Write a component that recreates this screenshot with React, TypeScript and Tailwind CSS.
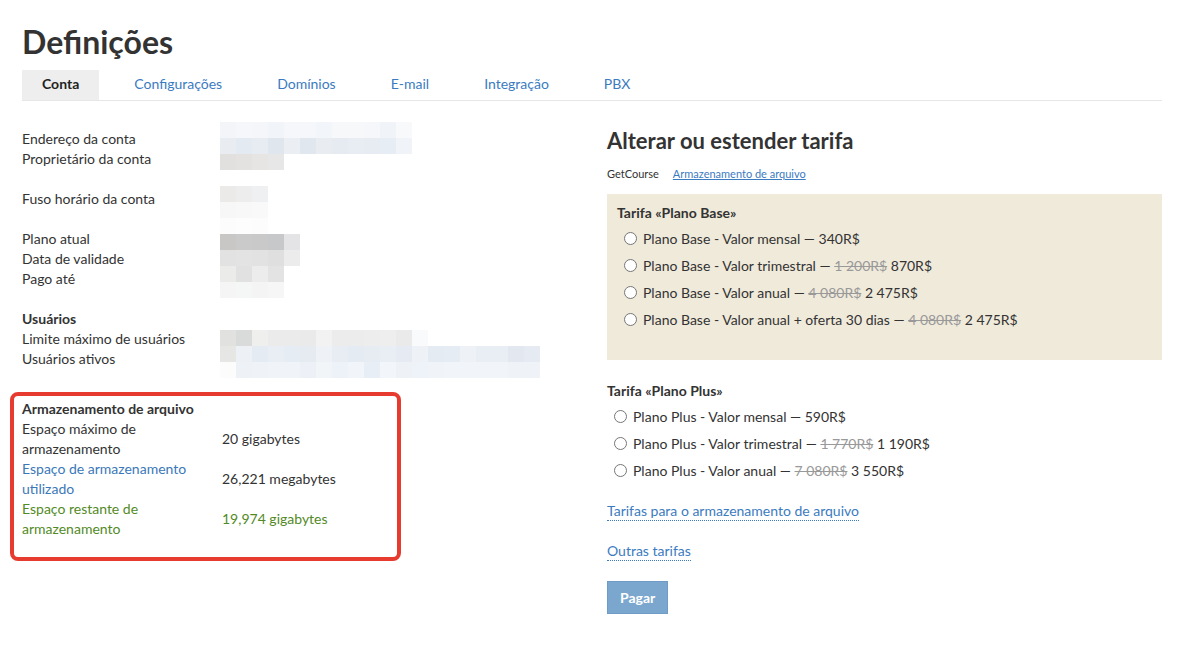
import React from "react";

type Cell = string;

// pixelated (blurred) values, 16px cells
const mosaicAccount: Cell[][] = [
  ["bg-[#f3f5f9]", "bg-[#f5f7fa]", "bg-[#f4f6f9]", "bg-[#f1f4f8]", "bg-[#f6f7fa]", "bg-[#f5f7fa]", "bg-[#f2f5f9]", "bg-[#f6f8fa]", "bg-[#f7f8fa]", "bg-[#f5f7fa]", "bg-[#f0f4f8]", "bg-[#f7f9fb]"],
  ["bg-[#e9edf2]", "bg-[#e4eaf2]", "bg-[#e7ecf3]", "bg-[#dfe6ee]", "bg-[#ebeff3]", "bg-[#e0e7ef]", "bg-[#e9edf1]", "bg-[#e6ebf2]", "bg-[#e8ecf3]", "bg-[#e7ecf3]", "bg-[#e6edf4]", "bg-[#f0f3f7]"],
  ["bg-[#e1e0df]", "bg-[#e3e2e1]", "bg-[#e6e5e4]", "bg-[#e7e7e8]"],
];

const mosaicTz: Cell[][] = [
  ["bg-[#ebeae9]", "bg-[#ecedec]", "bg-[#eef0f1]"],
  ["bg-[#f7f7f7]", "bg-[#f8f8f8]", "bg-[#f9f9f9]"],
  ["bg-[#fcfcfc]", "bg-[#fdfdfd]", "bg-[#fcfcfc]"],
];

const mosaicPlan: Cell[][] = [
  ["bg-[#c8c7c6]", "bg-[#cacaca]", "bg-[#c9c9c9]", "bg-[#c7c8ca]", "bg-[#e4e4e6]"],
  ["bg-[#e3e2e2]", "bg-[#e4e3e3]", "bg-[#e2e2e3]", "bg-[#e0dfe0]", "bg-[#ececed]"],
  ["bg-[#ebebea]", "bg-[#e1e1e1]", "bg-[#ececec]", "bg-[#e3e3e3]"],
  ["bg-[#f5f5f5]", "bg-[#f5f6f6]", "bg-[#f4f4f4]", "bg-[#f5f6f5]"],
];

const mosaicUsers: Cell[][] = [
  ["bg-[#e1e1e0]", "bg-[#d9dbdb]", "bg-[#efefee]", "bg-[#ebebeb]", "bg-[#ebebeb]", "bg-[#eaeaea]", "bg-[#f2f2f2]", "bg-[#ececec]", "bg-[#ececec]", "bg-[#ededed]", "bg-[#eeeeee]", "bg-[#eaeaea]", "bg-[#f9fafb]"],
  ["bg-[#e6e6e5]", "bg-[#edf0f5]", "bg-[#e5ebf3]", "bg-[#e9eef5]", "bg-[#e6ecf4]", "bg-[#e6ebf2]", "bg-[#eef1f5]", "bg-[#e8edf4]", "bg-[#e5ebf3]", "bg-[#e7ecf3]", "bg-[#e9edf4]", "bg-[#e6ebf3]", "bg-[#eef1f5]", "bg-[#e5ebf3]", "bg-[#e6ecf4]", "bg-[#eef1f5]", "bg-[#e9eef4]", "bg-[#e9eef5]", "bg-[#e3e8f0]", "bg-[#e6ebf3]"],
  ["bg-[#fcfcfc]", "bg-[#eef2f7]", "bg-[#eff3f7]", "bg-[#f0f4f8]", "bg-[#f0f3f7]", "bg-[#edf1f7]", "bg-[#f2f5f8]", "bg-[#edf2f8]", "bg-[#f1f4f8]", "bg-[#e8eef5]", "bg-[#f2f5f9]", "bg-[#eef2f7]", "bg-[#eef3f9]", "bg-[#f0f4f8]", "bg-[#f1f4f8]", "bg-[#f1f4f8]", "bg-[#f1f4f8]", "bg-[#f1f4f8]", "bg-[#eff3f7]", "bg-[#eff3f7]"],
];

const Mosaic = ({ rows, className = "" }: { rows: Cell[][]; className?: string }) => (
  <div className={`flex flex-col ${className}`}>
    {rows.map((row, i) => (
      <div key={i} className="flex h-[16px]">
        {row.map((c, j) => (
          <div key={j} className={`w-[16px] h-[16px] ${c}`} />
        ))}
      </div>
    ))}
  </div>
);

const Radio = ({ children }: { children: React.ReactNode }) => (
  <label className="flex items-center h-[27px] gap-[6px] text-[14px] text-[#333]">
    <span className="w-[13px] h-[13px] rounded-full border border-[#767676] bg-white shrink-0" />
    <span>{children}</span>
  </label>
);

const Old = ({ children }: { children: React.ReactNode }) => (
  <span className="line-through text-[#999]">{children}</span>
);

const tabs = ["Conta", "Configurações", "Domínios", "E-mail", "Integração", "PBX"];

export default function App() {
  return (
    <div
      className="min-h-[660px] bg-white text-[#333] pl-[22px] pr-[32px] pt-[24px]"
      style={{ fontFamily: "Lato, 'Liberation Sans', sans-serif" }}
    >
      <h1 className="text-[32px] leading-[36px] font-bold text-[#333]">Definições</h1>

      <div className="mt-[10px] flex gap-[15px] border-b border-[#e6e6e6] h-[31px]">
        {tabs.map((t, i) => (
          <div
            key={t}
            className={
              i === 0
                ? "px-[20px] h-[30px] pb-[3px] flex items-center bg-[#eeeeee] text-[14px] font-bold text-[#222]"
                : "px-[20px] h-[30px] pb-[3px] flex items-center text-[14px] text-[#3b7bbf]"
            }
          >
            {t}
          </div>
        ))}
      </div>

      <div className="flex mt-[28px]">
        {/* left column */}
        <div className="w-[585px] text-[14px] leading-[20px]">
          <div className="flex h-[40px]">
            <div className="w-[198px]">
              <div>Endereço da conta</div>
              <div>Proprietário da conta</div>
            </div>
            <Mosaic rows={mosaicAccount} className="-mt-[7px]" />
          </div>
          <div className="flex h-[20px] mt-[20px]">
            <div className="w-[198px]">Fuso horário da conta</div>
            <Mosaic rows={mosaicTz} className="-mt-[3px]" />
          </div>
          <div className="flex h-[60px] mt-[20px]">
            <div className="w-[198px]">
              <div>Plano atual</div>
              <div>Data de validade</div>
              <div>Pago até</div>
            </div>
            <Mosaic rows={mosaicPlan} className="mt-[5px]" />
          </div>
          <div className="mt-[20px] font-bold h-[20px]">Usuários</div>
          <div className="flex h-[40px]">
            <div className="w-[198px]">
              <div>Limite máximo de usuários</div>
              <div>Usuários ativos</div>
            </div>
            <Mosaic rows={mosaicUsers} className="mt-[1px]" />
          </div>

          <div className="mt-[23px] -ml-[12px] w-[391px] border-4 border-[#e63b2e] rounded-[8px] pl-[8px] pt-[3px] pb-[18px]">
            <div className="font-bold">Armazenamento de arquivo</div>
            <div className="flex items-center">
              <div className="w-[200px] pr-[20px]">Espaço máximo de armazenamento</div>
              <div>20 gigabytes</div>
            </div>
            <div className="flex items-center">
              <div className="w-[200px] pr-[20px] text-[#3a78b8]">Espaço de armazenamento utilizado</div>
              <div>26,221 megabytes</div>
            </div>
            <div className="flex items-center text-[#538a26]">
              <div className="w-[200px] pr-[20px]">Espaço restante de armazenamento</div>
              <div>19,974 gigabytes</div>
            </div>
          </div>
        </div>

        {/* right column */}
        <div className="flex-1">
          <h2 className="text-[22px] leading-[24px] font-bold text-[#333]">Alterar ou estender tarifa</h2>
          <div className="mt-[13px] flex gap-[14px] text-[11px] leading-[16px]">
            <span className="text-[#333]">GetCourse</span>
            <span className="text-[#3b7bbf] underline">Armazenamento de arquivo</span>
          </div>

          <div className="mt-[12px] bg-[#f0eadb] pl-[10px] pt-[9px] pb-[27px]">
            <div className="text-[14px] leading-[20px] font-bold">Tarifa «Plano Base»</div>
            <div className="pl-[7px] mt-[2px]">
              <Radio>Plano Base - Valor mensal — 340R$</Radio>
              <Radio>
                Plano Base - Valor trimestral — <Old>1 200R$</Old> 870R$
              </Radio>
              <Radio>
                Plano Base - Valor anual — <Old>4 080R$</Old> 2 475R$
              </Radio>
              <Radio>
                Plano Base - Valor anual + oferta 30 dias — <Old>4 080R$</Old> 2 475R$
              </Radio>
            </div>
          </div>

          <div className="mt-[21px] text-[14px] leading-[20px] font-bold">Tarifa «Plano Plus»</div>
          <div className="pl-[7px] mt-[2px]">
            <Radio>Plano Plus - Valor mensal — 590R$</Radio>
            <Radio>
              Plano Plus - Valor trimestral — <Old>1 770R$</Old> 1 190R$
            </Radio>
            <Radio>
              Plano Plus - Valor anual — <Old>7 080R$</Old> 3 550R$
            </Radio>
          </div>

          <div className="mt-[14px]">
            <span className="inline-block text-[14px] leading-[19px] text-[#3b7bbf] border-b border-dotted border-[#3b7bbf]">
              Tarifas para o armazenamento de arquivo
            </span>
          </div>
          <div className="mt-[16px]">
            <span className="inline-block text-[14px] leading-[19px] text-[#3b7bbf] border-b border-dotted border-[#3b7bbf]">
              Outras tarifas
            </span>
          </div>
          <button className="mt-[19px] h-[33px] px-[12px] bg-[#7ba7cf] text-white text-[14px] font-bold border border-[#6f9cc6]">
            Pagar
          </button>
        </div>
      </div>
    </div>
  );
}
